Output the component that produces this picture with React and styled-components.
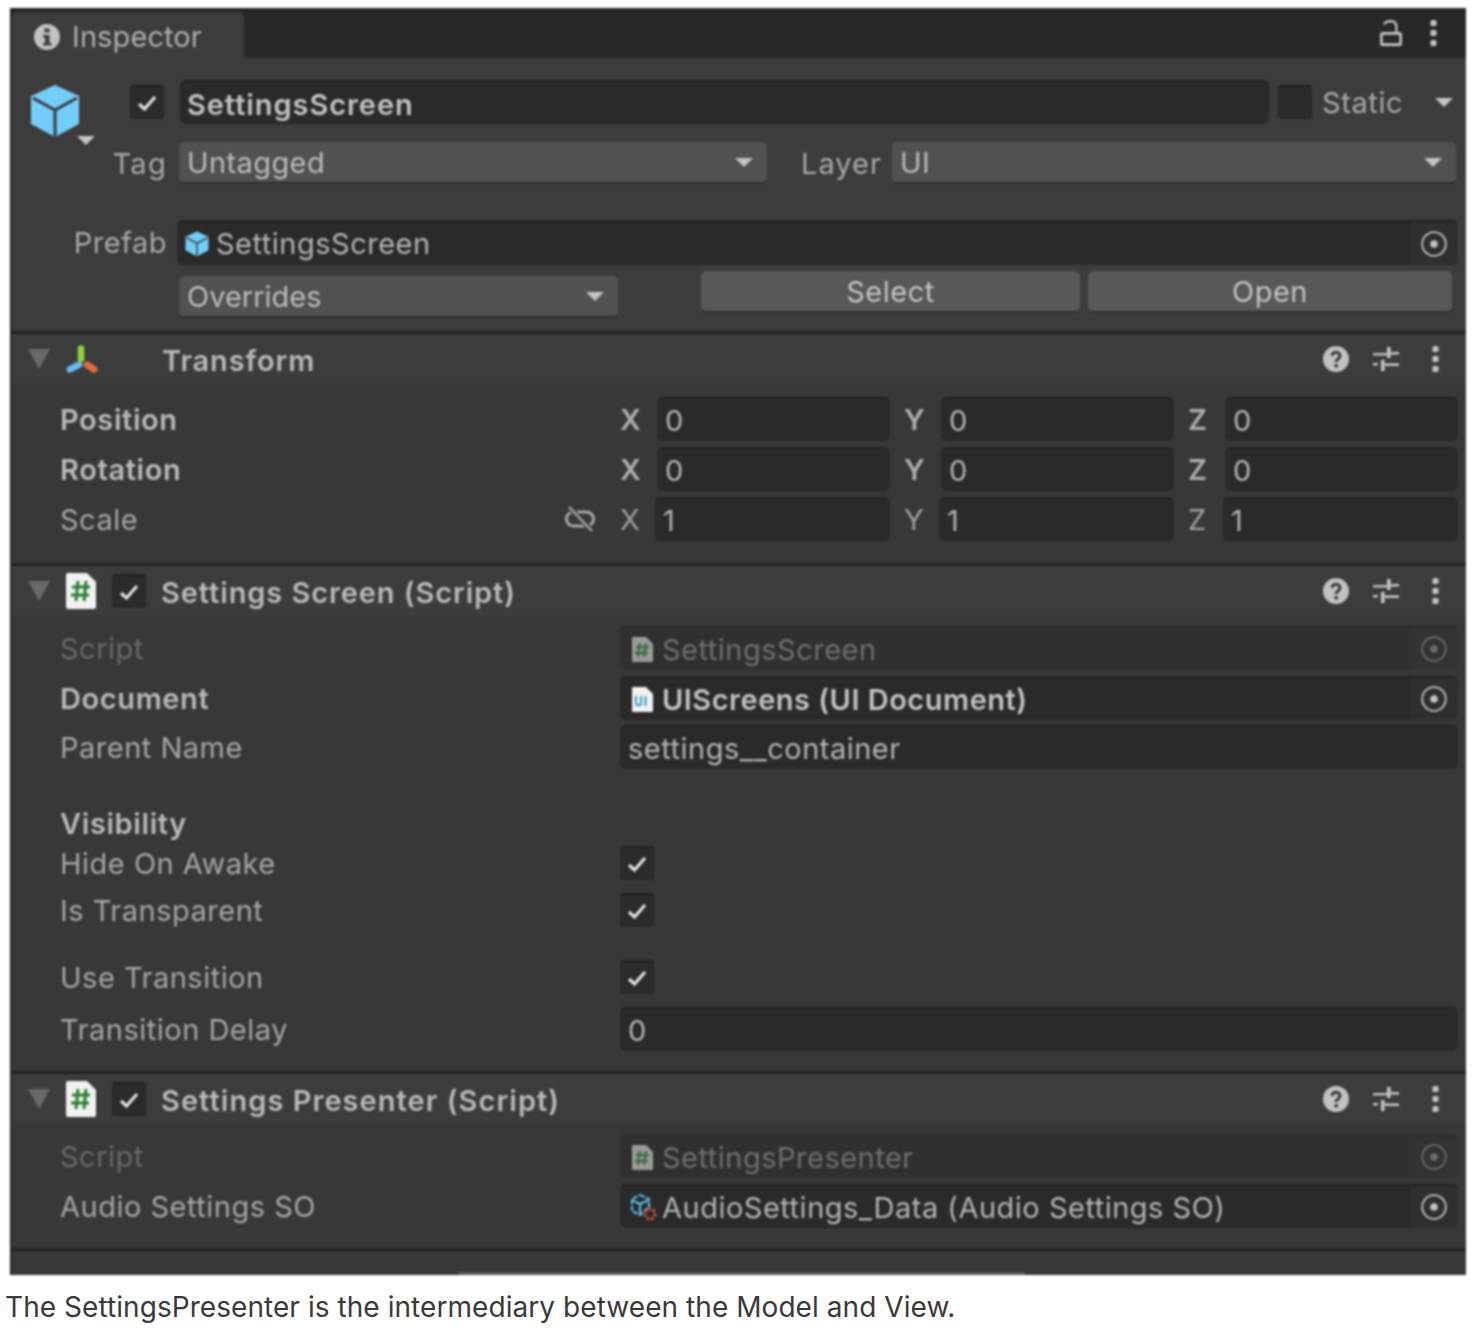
import React from 'react';
import styled, { createGlobalStyle } from 'styled-components';

const Global = createGlobalStyle`
	html, body {
		margin: 0;
		background: #fff;
	}
	body {
		font-family: Inter, 'Liberation Sans', sans-serif;
	}
`;

// Panel frame
const Page = styled.div`
	width: 1480px;
	height: 1328px;
	padding: 8px 0 0 10px;
	box-sizing: border-box;
	overflow: hidden;
`;

const Panel = styled.div`
	width: 1456px;
	height: 1267px;
	box-sizing: border-box;
	background: #383838;
	border-left: 2px solid #232323;
	display: flex;
	flex-direction: column;
	filter: blur(0.8px);
	overflow: hidden;
	letter-spacing: 0.5px;
`;

const Caption = styled.p`
	margin: 15px 0 0 -5px;
	font-size: 28px;
	line-height: 34px;
	letter-spacing: 0.06px;
	color: #3a3a3a;
	white-space: nowrap;
`;

const TabBar = styled.div`
	height: 50px;
	flex: none;
	background: #282828;
	display: flex;
	align-items: flex-end;
	justify-content: space-between;
	border-top: 2px solid #222;
	box-sizing: border-box;
`;

const Tab = styled.div`
	width: 232px;
	height: 46px;
	background: #3c3c3c;
	border-radius: 6px 6px 0 0;
	display: flex;
	align-items: center;
	gap: 12px;
	padding: 3px 0 0 22px;
	box-sizing: border-box;
	font-size: 29px;
	letter-spacing: 0.1px;
	color: #b0b0b0;
`;

const TabTools = styled.div`
	display: flex;
	align-items: center;
	gap: 28px;
	padding: 0 29px 4px 0;
	height: 46px;
	box-sizing: border-box;
`;

// Game object header
const ObjectHeader = styled.div`
	height: 276px;
	flex: none;
	background: #3c3c3c;
	border-bottom: 3px solid #232323;
	box-sizing: border-box;
	position: relative;
	padding-top: 22px;
`;

const Row = styled.div`
	display: flex;
	align-items: center;
	height: ${p => p.$h || 44}px;
	margin-top: ${p => p.$top || 0}px;
	padding-left: ${p => p.$left || 0}px;
`;

const CubeSlot = styled.div`
	position: absolute;
	left: 18px;
	top: 26px;
`;

const DropMark = styled.div`
	position: absolute;
	left: ${p => p.$left}px;
	top: ${p => p.$top}px;
	width: 0;
	height: 0;
	border-left: 9px solid transparent;
	border-right: 9px solid transparent;
	border-top: 9px solid #c4c4c4;
`;

const Check = styled.div`
	width: 34px;
	height: 34px;
	flex: none;
	box-sizing: border-box;
	background: #2b2b2b;
	border: 1px solid #272727;
	border-top: 2px solid #202020;
	border-radius: 4px;
	display: flex;
	align-items: center;
	justify-content: center;
	margin-left: ${p => p.$left || 0}px;
	margin-right: ${p => p.$right || 0}px;
`;

const NameField = styled.div`
	width: 1089px;
	height: 44px;
	margin-left: 16px;
	flex: none;
	box-sizing: border-box;
	background: #2a2a2a;
	border-top: 2px solid #212121;
	border-radius: 6px;
	padding: 2px 0 0 7px;
	font-size: 29px;
	font-weight: 600;
	letter-spacing: 0.93px;
	line-height: 42px;
	color: #c2c2c2;
`;

const StaticLabel = styled.span`
	font-size: 29px;
	letter-spacing: 0.6px;
	color: #a9a9a9;
	margin-left: 10px;
	width: 113px;
`;

const SideArrow = styled.span`
	width: 0;
	height: 0;
	border-left: 9px solid transparent;
	border-right: 9px solid transparent;
	border-top: 9px solid #c4c4c4;
`;

const SideLabel = styled.span`
	width: ${p => p.$w}px;
	margin-left: ${p => p.$left || 0}px;
	text-align: right;
	font-size: 29px;
	letter-spacing: ${p => p.$track || 0.5}px;
	color: #a9a9a9;
	flex: none;
`;

const Select = styled.div`
	width: ${p => p.$w}px;
	height: 42px;
	margin-left: ${p => p.$left || 0}px;
	flex: none;
	box-sizing: border-box;
	background: #515151;
	border-bottom: 2px solid #2f2f2f;
	border-radius: 5px;
	padding: 0 14px 0 8px;
	display: flex;
	align-items: center;
	justify-content: space-between;
	font-size: 29px;
	letter-spacing: ${p => p.$track ?? 0.4}px;
	color: #bcbcbc;
`;

const Button = styled.div`
	width: ${p => p.$w}px;
	height: 42px;
	margin-left: ${p => p.$left || 0}px;
	flex: none;
	box-sizing: border-box;
	background: #585858;
	border-bottom: 2px solid #2f2f2f;
	border-radius: 5px;
	text-align: center;
	line-height: 42px;
	font-size: 29px;
	color: #c4c4c4;
`;

const OverridesRow = styled(Row)`
	align-items: flex-start;
`;

const ButtonPair = styled.div`
	display: flex;
	margin-top: -5px;
`;

// Components
const ComponentHeader = styled.div`
	height: 52px;
	flex: none;
	background: #3c3c3c;
	border-bottom: 2px solid #353535;
	box-sizing: border-box;
	display: flex;
	align-items: center;
	padding-left: 16px;
	font-size: 29px;
	font-weight: 600;
	color: #b9b9b9;
`;

const HeaderTitle = styled.span`
	padding-top: 3px;
	letter-spacing: ${p => p.$track || 0.9}px;
`;

const Fold = styled.span`
	width: 0;
	height: 0;
	flex: none;
	border-left: 11px solid transparent;
	border-right: 11px solid transparent;
	border-top: 20px solid #696969;
	margin-right: 16px;
`;

const HeaderIcon = styled.span`
	display: flex;
	width: 32px;
	flex: none;
	margin-right: ${p => p.$gap}px;
`;

const HeaderTools = styled.div`
	margin-left: auto;
	display: flex;
	align-items: center;
	padding-right: 27px;
	gap: 24px;
`;

const DotSlot = styled.span`
	display: flex;
	margin-left: 9px;
`;

const Body = styled.div`
	height: ${p => p.$h}px;
	flex: none;
	box-sizing: border-box;
	border-bottom: 3px solid #232323;
	padding: ${p => p.$pad || 8}px 8px 0 48px;
	position: relative;
`;

const FieldLabel = styled.div`
	width: ${p => p.$w || 560}px;
	flex: none;
	font-size: 29px;
	font-weight: ${p => (p.$bold ? 600 : 400)};
	letter-spacing: ${p => (p.$bold ? 0.6 : 0.5)}px;
	color: ${p => (p.$dim ? '#696969' : p.$bold ? '#b9b9b9' : '#a6a6a6')};
`;

const Field = styled.div`
	flex: 1;
	height: ${p => p.$h || 44}px;
	min-width: 0;
	box-sizing: border-box;
	background: ${p => (p.$dim ? '#303030' : '#2a2a2a')};
	border-top: 2px solid ${p => (p.$dim ? '#2d2d2d' : '#222')};
	border-radius: 6px;
	display: flex;
	align-items: center;
	padding-left: ${p => p.$pad || 8}px;
	gap: ${p => p.$gap || 0}px;
	font-size: 29px;
	font-weight: ${p => (p.$bold ? 600 : 400)};
	color: ${p => (p.$dim ? '#6f6f6f' : p.$bold ? '#c2c2c2' : '#b4b4b4')};
	overflow: hidden;
`;

const PrefabField = styled(Field)`
	margin: 0 8px 0 10px;
`;

const ObjectPicker = styled.span`
	margin-left: auto;
	width: 47px;
	height: 44px;
	flex: none;
	padding-right: 2px;
	box-sizing: border-box;
	background: ${p => (p.$dim ? '#333' : '#2f2f2f')};
	display: flex;
	align-items: center;
	justify-content: center;
`;

const Axis = styled.span`
	width: ${p => p.$w}px;
	flex: none;
	font-size: 29px;
	letter-spacing: 0;
	font-weight: ${p => (p.$bold ? 600 : 400)};
	color: ${p => (p.$bold ? '#adadad' : '#a0a0a0')};
	padding-left: ${p => p.$left || 0}px;
	box-sizing: border-box;
`;

const AxisField = styled(Field)`
	flex: none;
	width: ${p => p.$w || 233}px;
`;

const LinkSlot = styled.span`
	position: absolute;
	left: 553px;
	top: 120px;
	display: flex;
`;

const LinkGap = styled.span`
	width: 56px;
	flex: none;
`;

const AddHint = styled.div`
	flex: 1;
	display: flex;
	align-items: flex-end;
	justify-content: center;
	padding-left: 6px;
`;

const AddEdge = styled.div`
	width: 566px;
	height: 3px;
	background: #5c5c5c;
`;

// Icons
const CheckMark = () => (
	<svg width="22" height="18" viewBox="0 0 22 18">
		<path d="M3 10l5.5 5L19 3" fill="none" stroke="#e2e2e2" strokeWidth="3.2" />
	</svg>
);

const InfoIcon = () => (
	<svg width="26" height="26" viewBox="0 0 26 26">
		<circle cx="13" cy="13" r="13" fill="#c2c2c2" />
		<rect x="10.5" y="4.5" width="5" height="4" fill="#3c3c3c" />
		<path d="M9 11h6.5v8H17.5v2.5H9V19h2v-5.5H9z" fill="#3c3c3c" />
	</svg>
);

const LockIcon = () => (
	<svg width="22" height="26" viewBox="0 0 22 26">
		<path d="M4 4.5C5 2.2 7.5 1.2 10.5 1.2C14 1.2 16.3 3 16.3 6.5V13" fill="none" stroke="#c8c8c8" strokeWidth="2.2" />
		<rect x="1.4" y="13.4" width="19.2" height="11.2" rx="1.2" fill="none" stroke="#c8c8c8" strokeWidth="2.6" />
	</svg>
);

const DotsIcon = ({ color = '#c4c4c4' }) => (
	<svg width="7" height="26" viewBox="0 0 7 26">
		<rect x="0.5" y="0" width="6" height="6" rx="1.5" fill={color} />
		<rect x="0.5" y="10" width="6" height="6" rx="1.5" fill={color} />
		<rect x="0.5" y="20" width="6" height="6" rx="1.5" fill={color} />
	</svg>
);

const HelpIcon = () => (
	<svg width="26" height="26" viewBox="0 0 26 26">
		<circle cx="13" cy="13" r="13" fill="#c2c2c2" />
		<path d="M9 10c0-5 8-5 8 0 0 3-4 3-4 6" fill="none" stroke="#3c3c3c" strokeWidth="3" />
		<rect x="11.5" y="18" width="3.4" height="3.4" fill="#3c3c3c" />
	</svg>
);

const SlidersIcon = () => (
	<svg width="26" height="26" viewBox="0 0 26 26" fill="#c4c4c4">
		<rect x="0" y="7" width="14" height="2.4" />
		<rect x="14" y="1" width="3.6" height="11" />
		<rect x="17.6" y="6" width="8.4" height="2.6" />
		<rect x="0" y="17" width="5" height="2.4" />
		<rect x="8" y="14" width="3.6" height="11" />
		<rect x="11.6" y="17.4" width="14.4" height="2.6" />
	</svg>
);

const Cube = ({ size = 50, face = '#73cdfb', line = '#3c3c3c' }) => (
	<svg width={size} height={size * 1.06} viewBox="0 0 50 53">
		<path d="M25 1L49 12v28L25 53 1 40V12z" fill={face} />
		<path d="M3 14l22 12 22-12M25 26v27" fill="none" stroke={line} strokeWidth="3" />
	</svg>
);

const TransformIcon = () => (
	<svg width="34" height="30" viewBox="0 0 34 30">
		<path d="M16 4v11" stroke="#8fd13f" strokeWidth="7" strokeLinecap="round" />
		<path d="M4 26l10-5" stroke="#63bdf0" strokeWidth="7" strokeLinecap="round" />
		<path d="M22 21l8 5" stroke="#ea6a3a" strokeWidth="7" strokeLinecap="round" />
	</svg>
);

const ScriptIcon = () => (
	<svg width="30" height="36" viewBox="0 0 30 36">
		<path d="M2 0h19l9 9v25a2 2 0 0 1-2 2H2a2 2 0 0 1-2-2V2a2 2 0 0 1 2-2z" fill="#f1f1f1" />
		<path d="M12 8L10 28M20 8l-2 20M6 14h18M5 22h18" stroke="#2d7f33" strokeWidth="3" fill="none" />
	</svg>
);

const SmallScript = () => (
	<svg width="21" height="25" viewBox="0 0 21 25">
		<path d="M1 0h13l7 7v17a1 1 0 0 1-1 1H1a1 1 0 0 1-1-1V1a1 1 0 0 1 1-1z" fill="#9a9a9a" />
		<path d="M8 6L6 20M14 6l-2 14M4 10h13M3 16h13" stroke="#3f6f42" strokeWidth="2.4" fill="none" />
	</svg>
);

const DocIcon = () => (
	<svg width="21" height="25" viewBox="0 0 21 25">
		<path d="M1 0h13l7 7v17a1 1 0 0 1-1 1H1a1 1 0 0 1-1-1V1a1 1 0 0 1 1-1z" fill="#f2f2f2" />
		<path d="M4 9v7c0 3 5 3 5 0V9M13.5 9v10" fill="none" stroke="#4b9fd0" strokeWidth="2.2" />
	</svg>
);

const SoIcon = () => (
	<svg width="27" height="27" viewBox="0 0 27 27">
		<path d="M10 1l9 4v8l-9 8-8-4V5z" fill="none" stroke="#5bb9e8" strokeWidth="2.2" strokeDasharray="5 1.5" />
		<path d="M2 6l8 4 9-4M10 10v10" fill="none" stroke="#5bb9e8" strokeWidth="2.2" />
		<circle cx="20" cy="20" r="5" fill="none" stroke="#d9552b" strokeWidth="3" strokeDasharray="2.5 1.8" />
	</svg>
);

const TargetIcon = ({ color = '#c4c4c4' }) => (
	<svg width="26" height="26" viewBox="0 0 26 26">
		<circle cx="13" cy="13" r="11.8" fill="none" stroke={color} strokeWidth="1.8" />
		<circle cx="13" cy="13" r="3.8" fill={color} />
	</svg>
);

const LinkOffIcon = () => (
	<svg width="30" height="26" viewBox="0 0 30 26">
		<rect x="1.5" y="6" width="27" height="14" rx="7" fill="none" stroke="#a8a8a8" strokeWidth="3" />
		<path d="M4 1l23 24" stroke="#383838" strokeWidth="5" />
		<path d="M4 1l23 24" stroke="#a8a8a8" strokeWidth="2.4" />
	</svg>
);

const Tools = () => (
	<HeaderTools>
		<HelpIcon />
		<SlidersIcon />
		<DotSlot>
			<DotsIcon />
		</DotSlot>
	</HeaderTools>
);

const VectorRow = ({ label, bold, top, values, scale }) => (
	<Row $top={top}>
		<FieldLabel $bold={bold} $w={scale ? 504 : 560}>
			{label}
		</FieldLabel>
		{scale && <LinkGap />}
		<Axis $bold={bold} $w={scale ? 35 : 37}>X</Axis>
		<AxisField $w={scale ? 235 : 233}>{values}</AxisField>
		<Axis $bold={bold} $w={scale ? 49 : 51} $left={14}>Y</Axis>
		<AxisField $w={scale ? 235 : 233}>{values}</AxisField>
		<Axis $bold={bold} $w={scale ? 49 : 51} $left={14}>Z</Axis>
		<AxisField $w={scale ? 235 : 233}>{values}</AxisField>
	</Row>
);

export default function App() {
	return (
		<Page>
			<Global />
			<Panel>
				<TabBar>
					<Tab>
						<InfoIcon />
						Inspector
					</Tab>
					<TabTools>
						<LockIcon />
						<DotsIcon />
					</TabTools>
				</TabBar>

				<ObjectHeader>
					<CubeSlot>
						<Cube />
					</CubeSlot>
					<DropMark $left={65} $top={78} />
					<Row>
						<Check $left={118}>
							<CheckMark />
						</Check>
						<NameField>SettingsScreen</NameField>
						<Check $left={9} />
						<StaticLabel>Static</StaticLabel>
						<SideArrow />
					</Row>
					<Row $h={42} $top={18}>
						<SideLabel $w={155} $track={1.3}>Tag</SideLabel>
						<Select $w={588} $left={12}>
							Untagged
							<SideArrow />
						</Select>
						<SideLabel $w={80} $left={34} $track={1}>Layer</SideLabel>
						<Select $w={564} $left={11}>
							UI
							<SideArrow />
						</Select>
					</Row>
					<Row $h={45} $top={36}>
						<SideLabel $w={155}>Prefab</SideLabel>
						<PrefabField $h={45} $gap={7}>
							<Cube size={24} />
							SettingsScreen
							<ObjectPicker>
								<TargetIcon />
							</ObjectPicker>
						</PrefabField>
					</Row>
					<OverridesRow $top={11} $left={167}>
						<Select $w={439} $track={0}>
							Overrides
							<SideArrow />
						</Select>
						<ButtonPair>
							<Button $w={379} $left={83}>Select</Button>
							<Button $w={364} $left={8}>Open</Button>
						</ButtonPair>
					</OverridesRow>
				</ObjectHeader>

				<ComponentHeader>
					<Fold />
					<HeaderIcon $gap={64}>
						<TransformIcon />
					</HeaderIcon>
					<HeaderTitle>Transform</HeaderTitle>
					<Tools />
				</ComponentHeader>
				<Body $h={180} $pad={11}>
					<VectorRow label="Position" bold values="0" />
					<VectorRow label="Rotation" bold top={6} values="0" />
					<LinkSlot>
						<LinkOffIcon />
					</LinkSlot>
					<VectorRow label="Scale" top={6} values="1" scale />
				</Body>

				<ComponentHeader>
					<Fold />
					<HeaderIcon $gap={14}>
						<ScriptIcon />
					</HeaderIcon>
					<Check $right={15}>
						<CheckMark />
					</Check>
					<HeaderTitle>Settings Screen (Script)</HeaderTitle>
					<Tools />
				</ComponentHeader>
				<Body $h={456}>
					<Row>
						<FieldLabel $dim>Script</FieldLabel>
						<Field $dim $pad={12} $gap={9}>
							<SmallScript />
							SettingsScreen
							<ObjectPicker $dim>
								<TargetIcon color="#6c6c6c" />
							</ObjectPicker>
						</Field>
					</Row>
					<Row $top={6}>
						<FieldLabel $bold>Document</FieldLabel>
						<Field $bold $pad={12} $gap={9}>
							<DocIcon />
							UIScreens (UI Document)
							<ObjectPicker>
								<TargetIcon />
							</ObjectPicker>
						</Field>
					</Row>
					<Row $top={5}>
						<FieldLabel>Parent Name</FieldLabel>
						<Field>settings__container</Field>
					</Row>
					<Row $h={36} $top={36}>
						<FieldLabel $bold>Visibility</FieldLabel>
					</Row>
					<Row $h={44} $top={0}>
						<FieldLabel>Hide On Awake</FieldLabel>
						<Check><CheckMark /></Check>
					</Row>
					<Row $h={44} $top={3}>
						<FieldLabel>Is Transparent</FieldLabel>
						<Check><CheckMark /></Check>
					</Row>
					<Row $h={44} $top={23}>
						<FieldLabel>Use Transition</FieldLabel>
						<Check><CheckMark /></Check>
					</Row>
					<Row $top={8}>
						<FieldLabel>Transition Delay</FieldLabel>
						<Field>0</Field>
					</Row>
				</Body>

				<ComponentHeader>
					<Fold />
					<HeaderIcon $gap={14}>
						<ScriptIcon />
					</HeaderIcon>
					<Check $right={15}>
						<CheckMark />
					</Check>
					<HeaderTitle $track={1.05}>Settings Presenter (Script)</HeaderTitle>
					<Tools />
				</ComponentHeader>
				<Body $h={125}>
					<Row>
						<FieldLabel $dim>Script</FieldLabel>
						<Field $dim $pad={12} $gap={9}>
							<SmallScript />
							SettingsPresenter
							<ObjectPicker $dim>
								<TargetIcon color="#6c6c6c" />
							</ObjectPicker>
						</Field>
					</Row>
					<Row $top={6}>
						<FieldLabel>Audio Settings SO</FieldLabel>
						<Field $pad={10} $gap={5}>
							<SoIcon />
							AudioSettings_Data (Audio Settings SO)
							<ObjectPicker>
								<TargetIcon />
							</ObjectPicker>
						</Field>
					</Row>
				</Body>
				<AddHint>
					<AddEdge />
				</AddHint>
			</Panel>
			<Caption>The SettingsPresenter is the intermediary between the Model and View.</Caption>
		</Page>
	);
}
